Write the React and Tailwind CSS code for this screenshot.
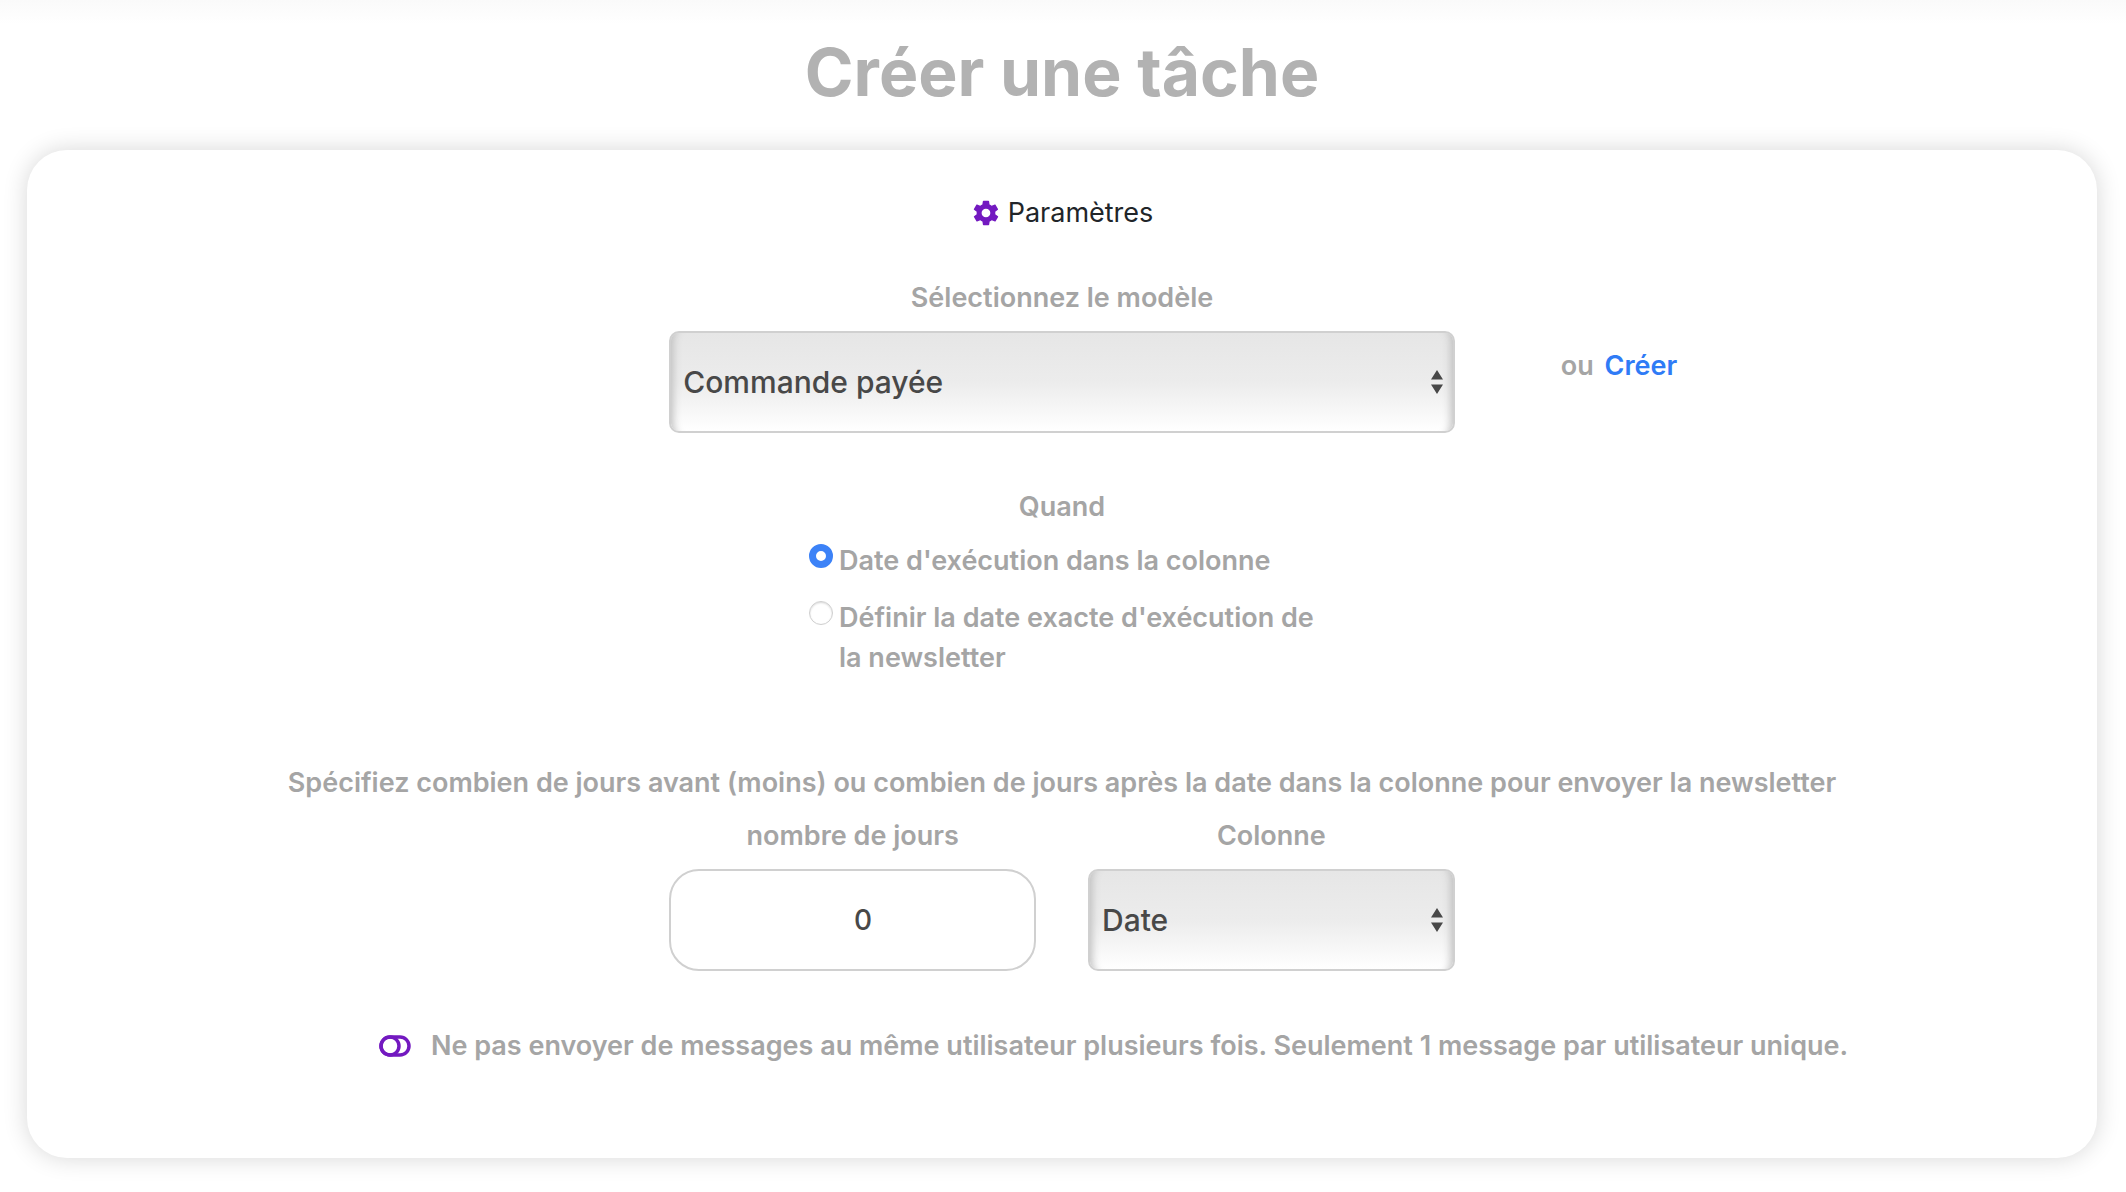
import React, { useState } from "react";
import { IoMdSettings } from "react-icons/io";

const labelClass = "block text-center text-[27px] leading-10 font-semibold text-[#a5a5a5]";

function SelectBox({ id, value, onChange, options }) {
    return (
        <div className="relative">
            <select
                id={id}
                value={value}
                onChange={(e) => onChange(e.target.value)}
                className="block w-full h-[102px] appearance-none rounded-[10px] border-2 border-[#d0d0d0] bg-linear-to-b from-[#e6e6e6] via-[#ececec] via-50% to-white pl-3 pr-10 text-[30px] font-medium text-[#484848] shadow-[inset_14px_0_8px_-12px_#bdbdbd,inset_-14px_0_8px_-12px_#bdbdbd]"
            >
                {options.map((o) => (
                    <option key={o} value={o}>{o}</option>
                ))}
            </select>
            <svg
                viewBox="0 0 12 24"
                className="pointer-events-none absolute right-3 top-1/2 h-6 w-3 -translate-y-1/2 fill-[#484848]"
            >
                <path d="M6 0l6 9.6H0zM6 24l6-9.6H0z" />
            </svg>
        </div>
    );
}

function RadioOption({ checked, onChange, children }) {
    return (
        <label className="flex items-start gap-[6px] text-[27px] leading-10 font-semibold text-[#a5a5a5]">
            <input
                type="radio"
                name="quand"
                checked={checked}
                onChange={onChange}
                className="mt-[3px] size-6 shrink-0 appearance-none rounded-full border border-[#cfcfcf] bg-white shadow-[inset_0_1px_2px_#d8d8d8] checked:border-[7px] checked:border-[#3c82f7] checked:shadow-none"
            />
            <span>{children}</span>
        </label>
    );
}

export default function CreerTache() {
    const [modele, setModele] = useState("Commande payée");
    const [quand, setQuand] = useState("colonne");
    const [jours, setJours] = useState("0");
    const [colonne, setColonne] = useState("Date");
    const [unique, setUnique] = useState(false);

    return (
        <div className="min-h-screen bg-linear-to-b from-[#fafafa] to-white to-[24px] pl-[27px] pr-[29px] pt-8 pb-8 font-['Inter',sans-serif]">
            <h1 className="text-center text-[66px] leading-20 font-bold text-[#b2b2b2]">Créer une tâche</h1>

            <form className="mt-[38px] rounded-[40px] bg-white px-[30px] pt-[43px] pb-[92px] shadow-[0_0_24px_rgba(0,0,0,0.16)]">
                <div className="flex items-center justify-center gap-[7px] text-[27px] leading-10 text-[#212529]">
                    <IoMdSettings className="size-[30px] text-[#7319c0]" />
                    <span>Paramètres</span>
                </div>

                <div className="mt-[45px] grid grid-cols-[7fr_10fr_7fr]">
                    <div className="col-start-2 px-[26px]">
                        <label htmlFor="modele" className={labelClass}>Sélectionnez le modèle</label>
                        <div className="mt-[13px]">
                            <SelectBox id="modele" value={modele} onChange={setModele} options={["Commande payée", "Panier abandonné"]} />
                        </div>
                    </div>
                    <div className="mt-[68px] pl-20 text-[27px] leading-10 font-semibold text-[#a5a5a5]">
                        ou <a href="#creer" className="ml-1 text-[#2f7bf6]">Créer</a>
                    </div>
                </div>

                <fieldset className="mx-auto mt-[54px] w-[506px]">
                    <legend className={labelClass + " w-full"}>Quand</legend>
                    <div className="mt-[14px] flex flex-col gap-[17px]">
                        <RadioOption checked={quand === "colonne"} onChange={() => setQuand("colonne")}>
                            Date d'exécution dans la colonne
                        </RadioOption>
                        <RadioOption checked={quand === "exacte"} onChange={() => setQuand("exacte")}>
                            Définir la date exacte d'exécution de la newsletter
                        </RadioOption>
                    </div>
                </fieldset>

                <p className={labelClass + " mt-[85px]"}>
                    Spécifiez combien de jours avant (moins) ou combien de jours après la date dans la colonne pour envoyer la newsletter
                </p>

                <div className="mt-[13px] grid grid-cols-[7fr_10fr_7fr]">
                    <div className="col-start-2 grid grid-cols-2 gap-[52px] px-[26px]">
                        <div>
                            <label htmlFor="jours" className={labelClass}>nombre de jours</label>
                            <input
                                id="jours"
                                type="number"
                                value={jours}
                                onChange={(e) => setJours(e.target.value)}
                                className="mt-[13px] block h-[102px] w-full rounded-[30px] border-2 border-[#d0d0d0] bg-white pl-9 text-center text-[28px] font-medium text-[#484848]"
                            />
                        </div>
                        <div>
                            <label htmlFor="colonne" className={labelClass}>Colonne</label>
                            <div className="mt-[13px]">
                                <SelectBox id="colonne" value={colonne} onChange={setColonne} options={["Date", "Nom"]} />
                            </div>
                        </div>
                    </div>
                </div>

                <div className="mt-[55px] flex items-center justify-center gap-5 pl-[103px]">
                    <button type="button" aria-labelledby="unique" aria-pressed={unique} onClick={() => setUnique(!unique)}>
                        <svg viewBox="0 0 32 22" className="h-[22px] w-8 fill-none stroke-[#7319c0] stroke-[3.5]">
                            <rect x="2" y="2" width="28" height="18" rx="9" />
                            <circle cx="11" cy="11" r="9" />
                        </svg>
                    </button>
                    <span id="unique" className="text-[27px] leading-10 font-semibold text-[#a5a5a5]">
                        Ne pas envoyer de messages au même utilisateur plusieurs fois. Seulement 1 message par utilisateur unique.
                    </span>
                </div>
            </form>
        </div>
    );
}
